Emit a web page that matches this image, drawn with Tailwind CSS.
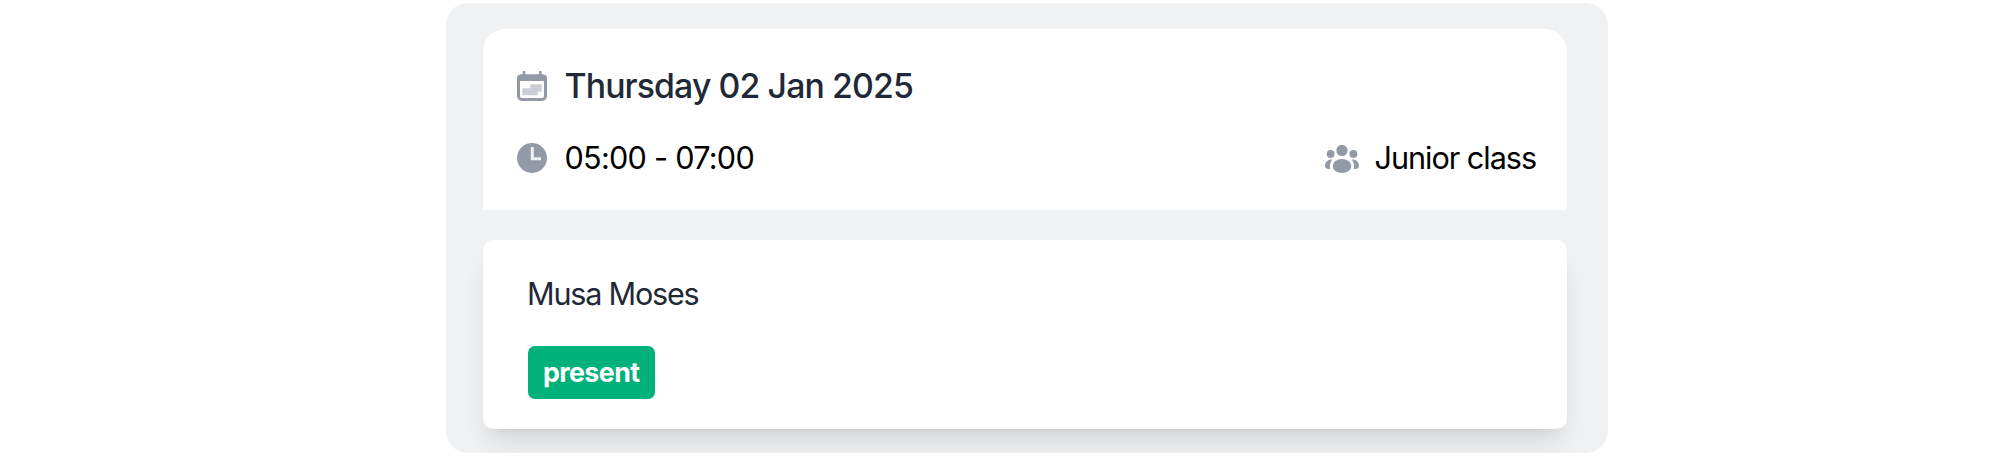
<!DOCTYPE html>
<html lang="en">
<head>
  <meta charset="UTF-8" />
  <title>Attendance</title>
  <script src="https://cdn.jsdelivr.net/npm/@tailwindcss/browser@4"></script>
</head>

<body class="bg-white overflow-hidden font-['Inter',sans-serif]">
  <!-- Attendance panel -->
  <main class="ml-[446px] mt-[3px] w-[1162px] h-[450px] rounded-[22px] bg-[#f0f1f3] pt-[26px] pl-[37px] pr-[41px] overflow-hidden">
    <!-- Session details -->
    <section class="h-[181px] rounded-t-[22px] bg-white pl-[33.5px] pr-[31px] pt-[35px] flex flex-col gap-7">
      <div class="flex items-center gap-[18px] h-11">
        <!-- Calendar icon -->
        <svg class="w-[30px] h-[30px]" viewBox="0 0 30 30">
          <rect x="1.5" y="5" width="27" height="23.5" rx="3.5" fill="#fff" stroke="#929aa7" stroke-width="3" />
          <path d="M0 10V7.5a4 4 0 0 1 4-4h22a4 4 0 0 1 4 4V10z" fill="#929aa7" />
          <path d="M5.7 0h2.6v5H5.7zM22 0h2.6v5H22z" fill="#929aa7" />
          <path d="M5.3 17.3h8v-4H24.7v7.4h-4v3.6H5.3z" fill="#c9cdd5" />
        </svg>
        <h2 class="text-[33.8px] leading-none font-medium text-[#1f2937] tracking-[-0.026em] whitespace-nowrap">Thursday 02 Jan 2025</h2>
      </div>
      <div class="flex items-center justify-between h-11">
        <div class="flex items-center gap-[18px]">
          <!-- Clock icon -->
          <svg class="w-[30px] h-[30px]" viewBox="0 0 30 30">
            <circle cx="15" cy="15" r="15" fill="#929aa7" />
            <path d="M15.3 4v11.7H24" fill="none" stroke="#eff0f3" stroke-width="3" />
          </svg>
          <span class="text-[30.6px] leading-none text-black tracking-[-0.024em] whitespace-nowrap">05:00 - 07:00</span>
        </div>
        <div class="flex items-center gap-[16px]">
          <!-- Group icon -->
          <svg class="w-[34px] h-[28px] mt-[2px]" viewBox="0 0 34 28" fill="#929aa7">
            <circle cx="17" cy="5.5" r="5.6" />
            <circle cx="5.6" cy="8.9" r="3.9" />
            <circle cx="28.4" cy="8.9" r="3.9" />
            <ellipse cx="17" cy="21" rx="9.3" ry="7" />
            <path d="M7.2 14.5C3 14.3 0 17 0 21c0 2 1.8 3.4 5 3-.4-4 .2-6.5 2.2-9.5z" />
            <path d="M26.8 14.5C31 14.3 34 17 34 21c0 2-1.8 3.4-5 3 .4-4-.2-6.5-2.2-9.5z" />
          </svg>
          <span class="text-[30.6px] leading-none text-black tracking-[-0.034em] whitespace-nowrap">Junior class</span>
        </div>
      </div>
    </section>

    <!-- Student card -->
    <section class="mt-[30px] h-[188.5px] rounded-[10px] bg-white pl-[45px] pt-8 shadow-[0_19px_28px_-6px_rgb(0_0_0/0.1),0_8px_11px_-8px_rgb(0_0_0/0.1)]">
      <p class="-ml-px text-[30.6px] leading-[44px] text-[#1f2937] tracking-[-0.04em]">Musa Moses</p>
      <span class="mt-[29.5px] flex items-center justify-center w-[126.5px] h-[53px] rounded-[7px] bg-[#00b27a] text-[26.7px] leading-none font-bold text-white tracking-[-0.02em]">present</span>
    </section>
  </main>
</body>
</html>
